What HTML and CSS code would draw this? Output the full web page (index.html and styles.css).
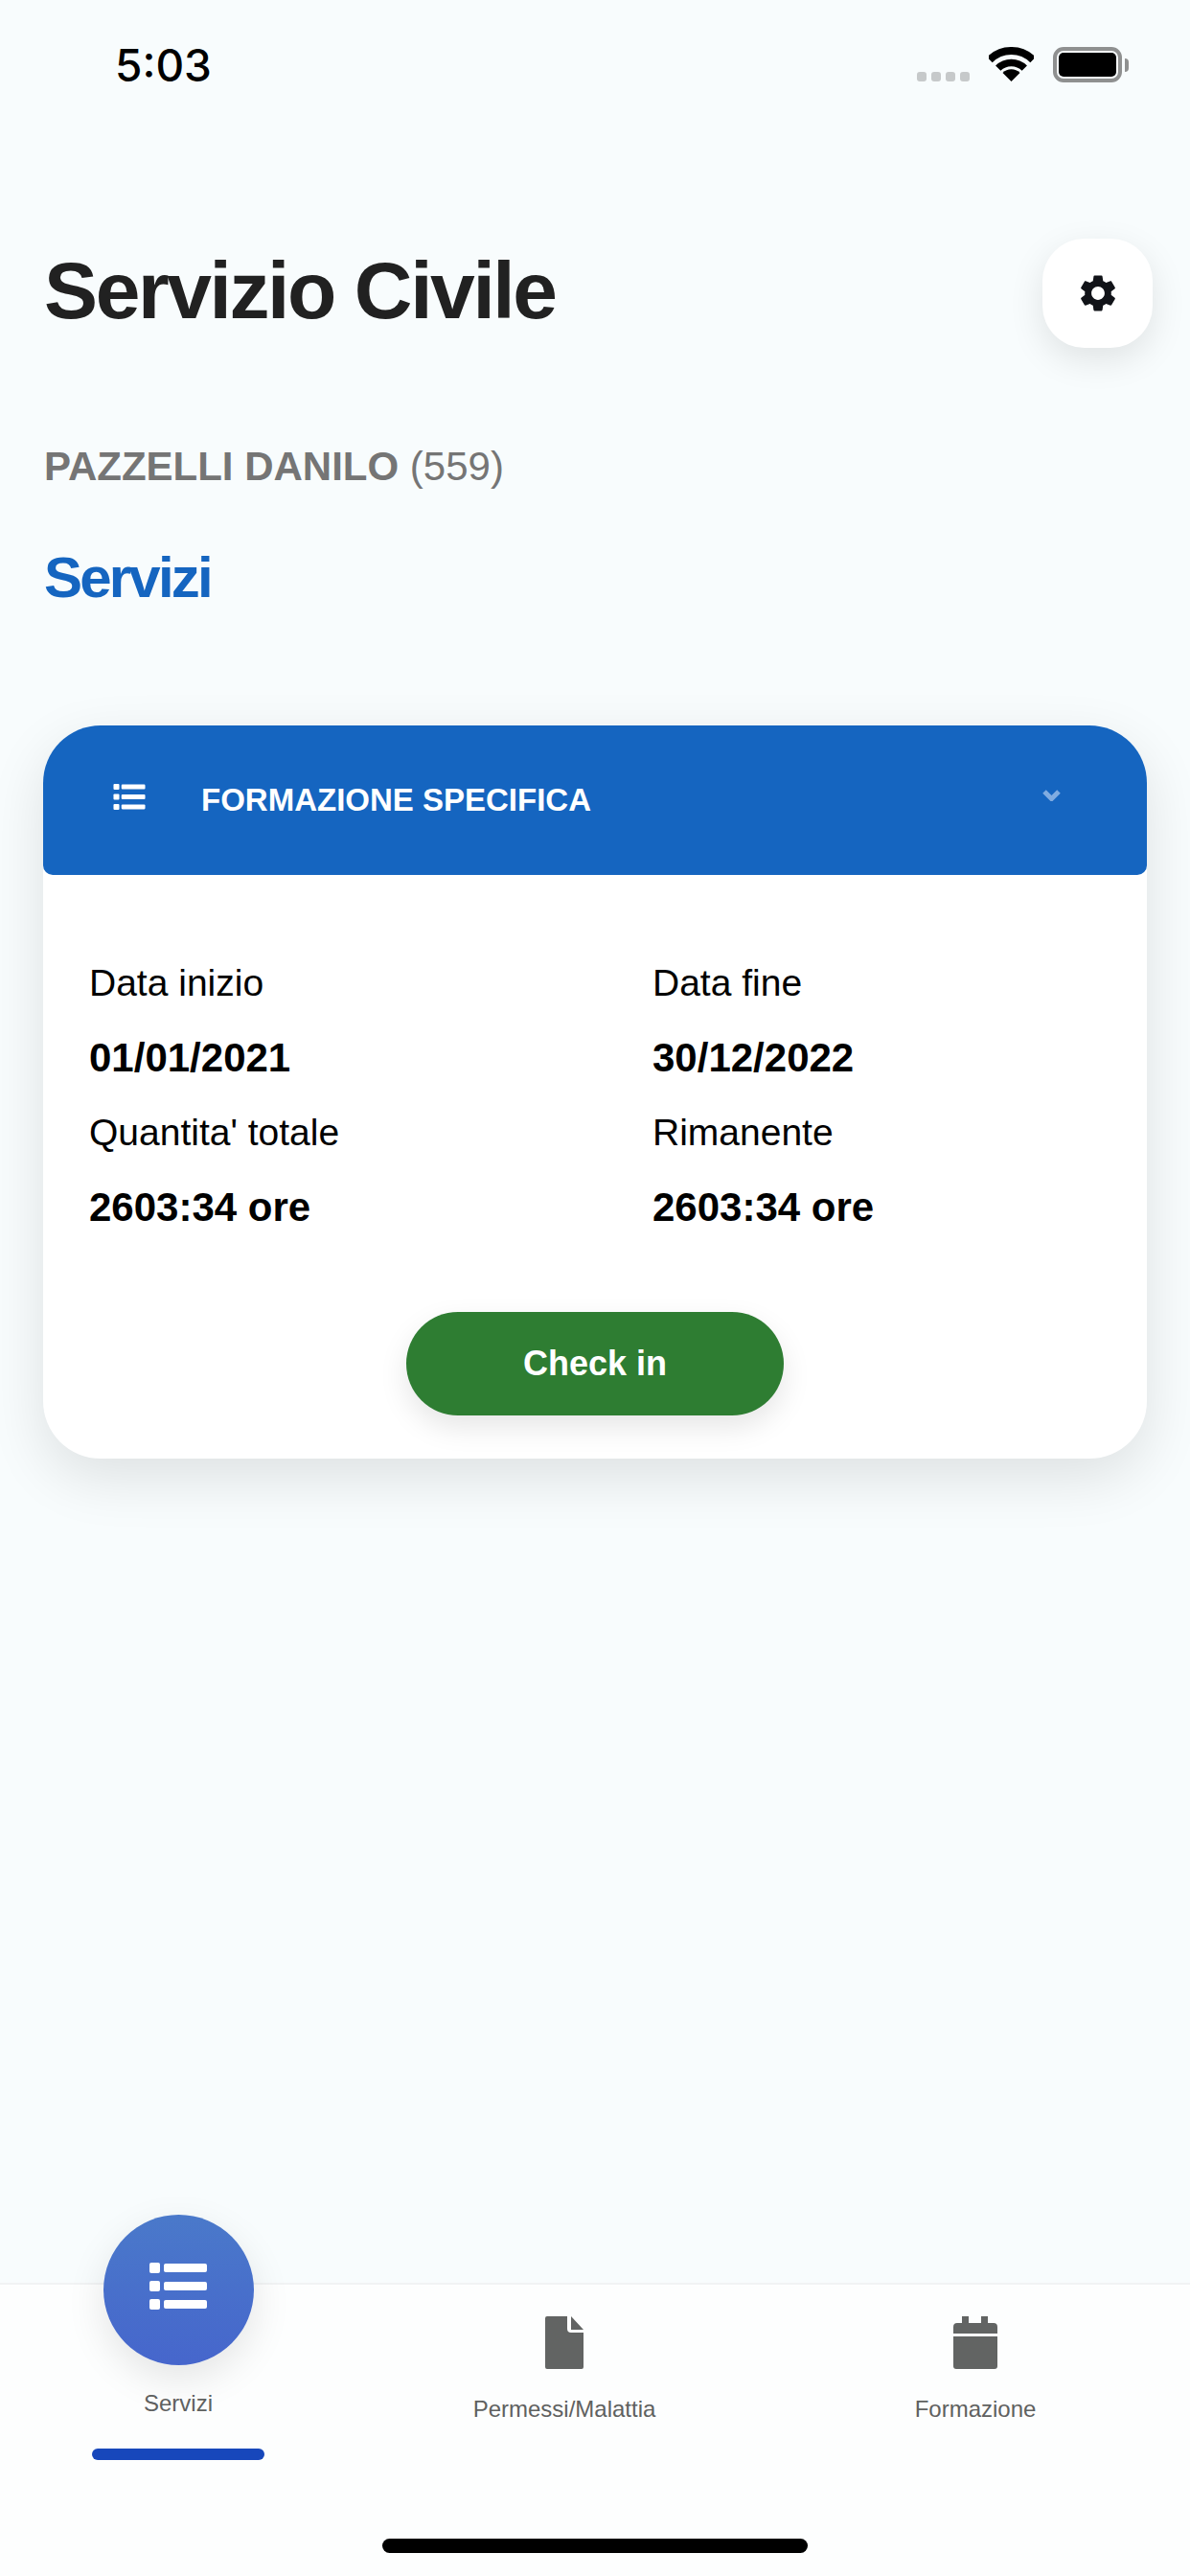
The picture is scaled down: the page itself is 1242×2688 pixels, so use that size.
FILE: index.html
```html
<!DOCTYPE html>
<html lang="it">
<head>
    <meta charset="UTF-8">
    <meta name="viewport" content="width=device-width, initial-scale=1.0">
    <title>Servizio Civile</title>
    <link rel="stylesheet" href="styles.css">
</head>
<body>
    <div class="page">
        <div class="status-bar">
            <span class="clock">5:03</span>
            <div class="status-icons">
                <div class="signal"><i></i><i></i><i></i><i></i></div>
                <svg class="wifi" viewBox="0 0 47 36">
                    <path d="M.87 13.37A32 32 0 0 1 46.13 13.37" fill="none" stroke="#000" stroke-width="8"/>
                    <path d="M9.71 22.21A19.5 19.5 0 0 1 37.29 22.21" fill="none" stroke="#000" stroke-width="7.5"/>
                    <path d="M23.5 36L14.5 27A12.7 12.7 0 0 1 32.5 27Z" fill="#000"/>
                </svg>
                <div class="battery"><div class="battery-level"></div></div>
                <div class="battery-nub"></div>
            </div>
        </div>

        <div class="top-row">
            <h1>Servizio Civile</h1>
            <button class="settings-btn">
                <svg class="gear" viewBox="0 0 24 24"><path fill="#111318" d="M19.14 12.94c.04-.3.06-.61.06-.94 0-.32-.02-.64-.07-.94l2.03-1.58c.18-.14.23-.41.12-.61l-1.92-3.32c-.12-.22-.37-.29-.59-.22l-2.39.96c-.5-.38-1.03-.7-1.62-.94l-.36-2.54c-.04-.24-.24-.41-.48-.41h-3.84c-.24 0-.43.17-.47.41l-.36 2.54c-.59.24-1.13.57-1.62.94l-2.39-.96c-.22-.08-.47 0-.59.22L2.74 8.87c-.12.21-.08.47.12.61l2.03 1.58c-.05.3-.09.63-.09.94s.02.64.07.94l-2.03 1.58c-.18.14-.23.41-.12.61l1.92 3.32c.12.22.37.29.59.22l2.39-.96c.5.38 1.03.7 1.62.94l.36 2.54c.05.24.24.41.48.41h3.84c.24 0 .44-.17.47-.41l.36-2.54c.59-.24 1.13-.56 1.62-.94l2.39.96c.22.08.47 0 .59-.22l1.92-3.32c.12-.22.07-.47-.12-.61l-2.01-1.58zM12 15.6c-1.98 0-3.6-1.62-3.6-3.6s1.62-3.6 3.6-3.6 3.6 1.62 3.6 3.6-1.62 3.6-3.6 3.6z"/></svg>
            </button>
        </div>

        <p class="user-name"><b>PAZZELLI DANILO</b> (559)</p>
        <h2>Servizi</h2>

        <div class="card">
            <div class="card-header">
                <svg class="list-small" viewBox="0 0 60 49"><use href="#list-icon"/></svg>
                <span class="card-title">FORMAZIONE SPECIFICA</span>
                <svg class="chevron" viewBox="0 0 19 12"><path d="M2 2L9.5 9.5L17 2" fill="none" stroke="#80ace1" stroke-width="5"/></svg>
            </div>
            <div class="card-body">
                <div class="data-grid">
                    <div>Data inizio</div>
                    <div>Data fine</div>
                    <div class="value">01/01/2021</div>
                    <div class="value">30/12/2022</div>
                    <div>Quantita' totale</div>
                    <div>Rimanente</div>
                    <div class="value">2603:34 ore</div>
                    <div class="value">2603:34 ore</div>
                </div>
                <button class="check-in">Check in</button>
            </div>
        </div>

        <div class="tab-bar">
            <div class="tabs">
                <div class="tab tab-active">
                    <div class="tab-circle">
                        <svg class="list-big" viewBox="0 0 60 49">
                            <g id="list-icon" fill="#fff">
                                <rect x="0" y="0" width="11" height="11" rx="2"/>
                                <rect x="15" y="1" width="45" height="9" rx="2"/>
                                <rect x="0" y="19" width="11" height="11" rx="2"/>
                                <rect x="15" y="20" width="45" height="9" rx="2"/>
                                <rect x="0" y="38" width="11" height="11" rx="2"/>
                                <rect x="15" y="39" width="45" height="9" rx="2"/>
                            </g>
                        </svg>
                    </div>
                    <span class="tab-label">Servizi</span>
                    <div class="tab-line"></div>
                </div>
                <div class="tab">
                    <svg class="tab-icon file-icon" viewBox="0 0 40 55">
                        <path fill="#626463" d="M2 0H23V13a4 4 0 0 0 4 4H40V53a2 2 0 0 1-2 2H2a2 2 0 0 1-2-2V2a2 2 0 0 1 2-2z"/>
                        <path fill="#626463" d="M27 0L40 14H27z"/>
                    </svg>
                    <span class="tab-label">Permessi/Malattia</span>
                </div>
                <div class="tab">
                    <svg class="tab-icon cal-icon" viewBox="0 0 46 55">
                        <path fill="#626463" d="M9 0h7v7h13V0h7v7h6a4 4 0 0 1 4 4v7H0v-7a4 4 0 0 1 4-4h5z"/>
                        <path fill="#626463" d="M0 21h46v31a3 3 0 0 1-3 3H3a3 3 0 0 1-3-3z"/>
                    </svg>
                    <span class="tab-label">Formazione</span>
                </div>
            </div>
            <div class="home-bar"></div>
        </div>
    </div>
</body>
</html>
```

FILE: styles.css
```css
body {
    margin: 0;
    background-color: #f8fcfd;
    font-family: "Liberation Sans", Arial, sans-serif;
    color: #000;
}
.page {
    display: flex;
    flex-direction: column;
    height: 2688px;
    overflow: hidden;
}

/* status bar */
.status-bar {
    display: flex;
    justify-content: space-between;
    align-items: flex-start;
    height: 249px;
    padding: 0 64px 0 120px;
    box-sizing: border-box;
}
.clock {
    margin-top: 40px;
    font-family: Inter, sans-serif;
    font-size: 46px;
    font-weight: 500;
    line-height: 56px;
}
.status-icons {
    display: flex;
    align-items: flex-start;
    margin-top: 49px;
}
.signal {
    display: flex;
    gap: 5px;
    margin-top: 26px;
    margin-right: 20px;
}
.signal i {
    width: 10px;
    height: 10px;
    border-radius: 3px;
    background-color: #c6c9ca;
}
.wifi {
    width: 47px;
    height: 36px;
    margin-right: 20px;
}
.battery {
    width: 72px;
    height: 37px;
    padding: 2px;
    border: 4px solid #8f9090;
    border-radius: 11px;
    box-sizing: border-box;
}
.battery-level {
    height: 100%;
    background-color: #000;
    border-radius: 5px;
}
.battery-nub {
    width: 4px;
    height: 14px;
    margin: 12px 0 0 3px;
    background-color: #8f9090;
    border-radius: 0 4px 4px 0;
}

/* heading */
.top-row {
    display: flex;
    justify-content: space-between;
    align-items: center;
    padding: 0 39px 0 46px;
}
h1 {
    margin: 0 0 6px;
    font-size: 84px;
    font-weight: bold;
    letter-spacing: -2.4px;
    color: #212121;
}
.settings-btn {
    display: flex;
    align-items: center;
    justify-content: center;
    width: 115px;
    height: 114px;
    padding: 0;
    border: none;
    border-radius: 44px;
    background-color: #fff;
    box-shadow: 0 12px 36px rgba(0, 0, 0, 0.1);
}
.gear {
    width: 46px;
    height: 46px;
}
.user-name {
    margin: 100px 0 0 46px;
    font-size: 42px;
    line-height: 48px;
    color: #757575;
}
h2 {
    margin: 57px 0 0 46px;
    font-size: 60px;
    line-height: 70px;
    font-weight: bold;
    letter-spacing: -2.8px;
    color: #1565c0;
}

/* card */
.card {
    margin: 119px 45px 0;
    border-radius: 60px;
    background-color: #fff;
    box-shadow: 0 20px 60px rgba(0, 0, 0, 0.11);
}
.card-header {
    display: flex;
    align-items: center;
    height: 156px;
    padding: 0 90px 0 73px;
    box-sizing: border-box;
    background-color: #1565c0;
    border-radius: 60px 60px 10px 10px;
}
.list-small {
    width: 34px;
    height: 27px;
    margin-bottom: 8px;
}
.card-title {
    flex: 1;
    margin-left: 58px;
    font-size: 33px;
    font-weight: bold;
    color: #fff;
}
.chevron {
    width: 19px;
    height: 12px;
    margin-bottom: 10px;
}
.card-body {
    display: flex;
    flex-direction: column;
    align-items: center;
    padding: 74px 0 45px;
}
.data-grid {
    display: grid;
    grid-template-columns: 588px 1fr;
    width: 100%;
    padding-left: 48px;
    box-sizing: border-box;
    font-size: 39px;
    line-height: 78px;
}
.value {
    font-size: 42px;
    font-weight: bold;
}
.check-in {
    width: 394px;
    height: 108px;
    margin-top: 70px;
    border: none;
    border-radius: 54px;
    background-color: #2e7d32;
    color: #fff;
    font-family: inherit;
    font-size: 36px;
    font-weight: bold;
    box-shadow: 0 12px 30px rgba(0, 0, 0, 0.1);
}

/* tab bar */
.tab-bar {
    display: flex;
    flex-direction: column;
    margin-top: auto;
    height: 306px;
    box-sizing: border-box;
    border-top: 2px solid #f1f3f4;
    background-color: #fdfefe;
}
.tabs {
    display: grid;
    grid-template-columns: 372px 434px 424px;
}
.tab {
    display: flex;
    flex-direction: column;
    align-items: center;
    padding-top: 33px;
}
.tab-active {
    padding-top: 0;
    margin-top: -73px;
}
.tab-circle {
    display: flex;
    align-items: center;
    justify-content: center;
    width: 157px;
    height: 157px;
    padding-bottom: 9px;
    box-sizing: border-box;
    border-radius: 50%;
    background: linear-gradient(#4a79ca, #4666cc);
    box-shadow: 0 14px 40px rgba(0, 0, 0, 0.1);
}
.list-big {
    width: 60px;
    height: 49px;
}
.tab-icon {
    height: 55px;
}
.file-icon {
    width: 40px;
}
.cal-icon {
    width: 46px;
}
.tab-label {
    margin-top: 27px;
    font-size: 24px;
    line-height: 30px;
    color: #5f6160;
}
.tab-active .tab-label {
    margin-top: 25px;
}
.tab-line {
    width: 180px;
    height: 12px;
    margin-top: 32px;
    border-radius: 6px;
    background-color: #1747bb;
}
.home-bar {
    align-self: center;
    width: 444px;
    height: 15px;
    margin-top: auto;
    margin-bottom: 24px;
    border-radius: 8px;
    background-color: #000;
}
```
